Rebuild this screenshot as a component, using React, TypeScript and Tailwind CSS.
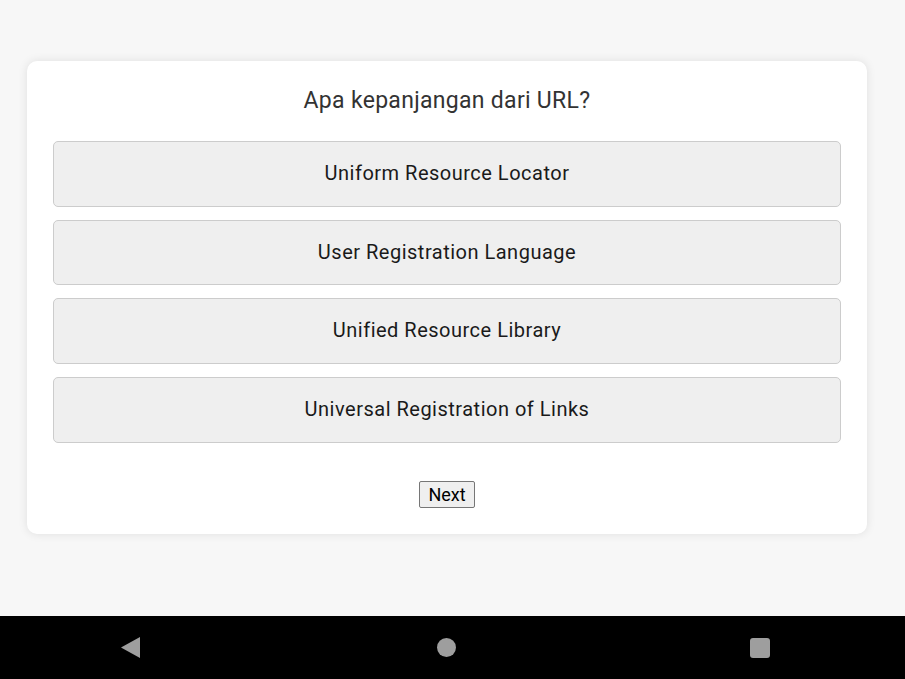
const options = [
  'Uniform Resource Locator',
  'User Registration Language',
  'Unified Resource Library',
  'Universal Registration of Links'
]

const App = () => {
  return (
    <div className="flex h-[679px] w-[905px] flex-col overflow-hidden bg-[#f7f7f7] font-['Roboto',sans-serif]">
      <main className="h-[616px] pl-[27px] pt-[61px]">
        <section className="w-[840px] rounded-[10px] bg-white p-[26px] shadow-[0_0_10px_rgba(0,0,0,0.1)]">
          <h1 className="h-[28px] text-center text-[23px] leading-[28px] tracking-[0.3px] text-[#333]">
            Apa kepanjangan dari URL?
          </h1>
          <div className="mt-[26px] flex flex-col gap-[13px]">
            {options.map((option) => (
              <button
                key={option}
                type="button"
                className="h-[65.7px] w-full rounded-[5px] border border-[#ccc] bg-[#efefef] pb-[2px] text-center text-[20px] tracking-[0.5px] text-[#1a1a1a]"
              >
                {option}
              </button>
            ))}
          </div>
          <div className="mt-[38px] flex justify-center">
            <button
              type="button"
              className="h-[27px] rounded-[2px] border border-[#767676] bg-[#efefef] px-[8px] text-[18px] leading-[25px] text-black"
            >
              Next
            </button>
          </div>
        </section>
      </main>
      <nav className="flex h-[63px] items-center bg-black pl-[121px]">
        <svg width="19" height="21" viewBox="0 0 19 21">
          <polygon points="19,0 19,21 0,10.5" fill="#9e9e9e" />
        </svg>
        <div className="ml-[297px] h-[19px] w-[19px] rounded-full bg-[#9e9e9e]" />
        <div className="ml-[294px] h-[20px] w-[20px] rounded-[3px] bg-[#9e9e9e]" />
      </nav>
    </div>
  )
}

export default App
